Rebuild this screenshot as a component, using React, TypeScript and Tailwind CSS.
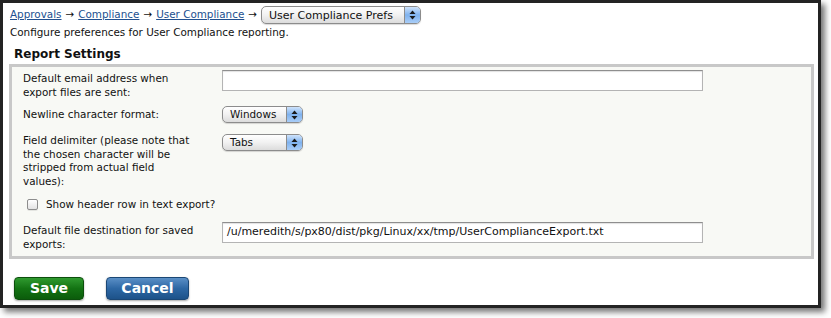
import React from 'react';

function Arrows() {
  return (
    <svg width="7" height="10" viewBox="0 0 7 10" className="block">
      <path d="M3.5 0.5 L6.5 4 L0.5 4 Z" fill="#1a1a1a" />
      <path d="M3.5 9.5 L6.5 6 L0.5 6 Z" fill="#1a1a1a" />
    </svg>
  );
}

function AquaSelect({ label, width, height }: { label: string; width: string; height: string }) {
  return (
    <div
      className={`flex items-stretch ${width} ${height} rounded-[5px] border border-[#8c8c8c] bg-gradient-to-b from-white via-[#f1f1f1] to-[#dcdcdc] shadow-[0_1px_1px_rgba(0,0,0,0.15)] overflow-hidden`}
    >
      <span className="flex-1 flex items-center pl-[7px] text-[#111] leading-none whitespace-nowrap">{label}</span>
      <span className="w-[16px] flex items-center justify-center border-l border-[#8c8c8c] bg-gradient-to-b from-[#cfe3fb] via-[#7fb2ee] to-[#a9cdf7]">
        <Arrows />
      </span>
    </div>
  );
}

function TextInput({ value }: { value?: string }) {
  return (
    <div className="w-[481px] h-[21px] bg-white border border-[#b4b4b4] border-t-[#8e8e8e] shadow-[inset_0_1px_1px_rgba(0,0,0,0.12)] flex items-center pl-[4px] text-[#111] text-[11px] overflow-hidden whitespace-nowrap">
      {value}
    </div>
  );
}

export default function App() {
  return (
    <div
      className="w-[831px] h-[318px] bg-white text-[10.4px] text-[#111]"
      style={{ fontFamily: '"DejaVu Sans", Verdana, sans-serif' }}
    >
      <div className="w-[821px] h-[308px] border-[3px] border-[#232323] bg-white shadow-[4px_4px_6px_rgba(0,0,0,0.55)] pl-[7px] pt-[3px]">
        {/* breadcrumb */}
        <div className="flex items-center h-[18px] gap-[4px]">
          <a className="text-[#22508f] underline">Approvals</a>
          <span>→</span>
          <a className="text-[#22508f] underline">Compliance</a>
          <span>→</span>
          <a className="text-[#22508f] underline">User Compliance</a>
          <span>→</span>
          <div className="text-[11px]">
            <AquaSelect label="User Compliance Prefs" width="w-[160px]" height="h-[18px]" />
          </div>
        </div>
        <div className="mt-[2px] leading-[13px]">Configure preferences for User Compliance reporting.</div>

        <div className="mt-[8px] pl-[4px] font-bold text-[12px] leading-[14px]">Report Settings</div>

        <div className="mt-[3px] ml-[-1px] w-[805px] h-[195px] border-[3px] border-[#c8c8c8] bg-[#f8f9f5] pt-[2px]">
          {/* row 1 */}
          <div className="flex">
            <div className="w-[210px] pl-[11px] pt-[3px] leading-[13.5px]">
              Default email address when
              <br />
              export files are sent:
            </div>
            <div className="pt-[1px]">
              <TextInput />
            </div>
          </div>

          {/* row 2 */}
          <div className="flex mt-[7px] items-center">
            <div className="w-[210px] pl-[11px] leading-[13.5px]">Newline character format:</div>
            <AquaSelect label="Windows" width="w-[81px]" height="h-[17px]" />
          </div>

          {/* row 3 */}
          <div className="flex mt-[11px]">
            <div className="w-[210px] pl-[11px] leading-[13.5px]">
              Field delimiter (please note that
              <br />
              the chosen character will be
              <br />
              stripped from actual field
              <br />
              values):
            </div>
            <AquaSelect label="Tabs" width="w-[81px]" height="h-[17px]" />
          </div>

          {/* checkbox */}
          <label className="flex items-center mt-[10px] pl-[15px] gap-[8px] leading-[13px]">
            <span className="w-[11px] h-[11px] rounded-[2px] border border-[#8d8d8d] bg-gradient-to-b from-white to-[#e3e3e3] shadow-[0_1px_0_rgba(0,0,0,0.08)]" />
            <span>Show header row in text export?</span>
          </label>

          {/* row 5 */}
          <div className="flex mt-[11px]">
            <div className="w-[210px] pl-[11px] pt-[2px] leading-[13.5px]">
              Default file destination for saved
              <br />
              exports:
            </div>
            <TextInput value="/u/meredith/s/px80/dist/pkg/Linux/xx/tmp/UserComplianceExport.txt" />
          </div>
        </div>

        {/* buttons */}
        <div className="flex gap-[22px] mt-[18px] ml-[4px]">
          <button className="w-[70px] h-[23px] rounded-[4px] border border-[#0c4f0c] bg-gradient-to-b from-[#2f9a2f] via-[#137313] to-[#0b5c0b] text-white font-bold text-[14px] shadow-[0_1px_2px_rgba(0,0,0,0.35)]">
            Save
          </button>
          <button className="w-[83px] h-[23px] rounded-[4px] border border-[#1b4775] bg-gradient-to-b from-[#5a8fc6] via-[#2d67a4] to-[#1d5289] text-white font-bold text-[14px] shadow-[0_1px_2px_rgba(0,0,0,0.35)]">
            Cancel
          </button>
        </div>
      </div>
    </div>
  );
}
